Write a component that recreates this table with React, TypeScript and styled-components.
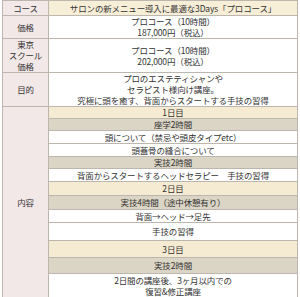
import React from "react";
import styled, { createGlobalStyle } from "styled-components";

const GlobalStyle = createGlobalStyle`
  html, body {
    margin: 0;
    padding: 0;
    background: #fff;
  }
  body {
    font-family: "Noto Sans CJK JP", "Noto Sans", sans-serif;
    color: #333;
  }
`;

type Tone = "white" | "day" | "session";

const tones: Record<Tone, string> = {
  white: "#ffffff",
  day: "#f5ebd3",
  session: "#dbd5c5",
};

const Page = styled.div`
  padding: 0 2px;
`;

const Table = styled.table`
  width: 296px;
  border-collapse: collapse;
  table-layout: fixed;
  font-size: 8.5px;
  line-height: 11px;
  letter-spacing: -0.15px;
`;

const Row = styled.tr<{ $h: number }>`
  height: ${(p) => p.$h}px;
`;

const Label = styled.th`
  width: 45px;
  padding: 0;
  background: #f2e8e8;
  border: 1px solid #bdb6ae;
  font-weight: 400;
  text-align: center;
  vertical-align: middle;
`;

const Cell = styled.td<{ $tone?: Tone }>`
  padding: 0;
  background: ${(p) => tones[p.$tone ?? "white"]};
  border: 1px solid #bdb6ae;
  text-align: center;
  vertical-align: middle;
`;

const HeadCell = styled(Cell)`
  background: #f7eed8;
`;

const schedule: { text: React.ReactNode; tone: Tone; h: number }[] = [
  { text: "1日目", tone: "day", h: 12 },
  { text: "座学2時間", tone: "session", h: 12 },
  { text: "頭について（禁忌や頭皮タイプetc）", tone: "white", h: 13 },
  { text: "頭蓋骨の縫合について", tone: "white", h: 13 },
  { text: "実技2時間", tone: "session", h: 11 },
  { text: "背面からスタートするヘッドセラピー　手技の習得", tone: "white", h: 13 },
  { text: "2日目", tone: "day", h: 14 },
  { text: "実技4時間（途中休憩有り）", tone: "session", h: 14 },
  { text: "背面→ヘッド→足先", tone: "white", h: 13 },
  { text: "手技の習得", tone: "white", h: 18 },
  { text: "3日目", tone: "day", h: 17 },
  { text: "実技2時間", tone: "session", h: 16 },
  {
    text: (
      <>
        2日間の講座後、3ヶ月以内での
        <br />
        復習&修正講座
      </>
    ),
    tone: "white",
    h: 24,
  },
];

export default function App() {
  return (
    <Page>
      <GlobalStyle />
      <Table>
        <tbody>
          <Row $h={15}>
            <Label>コース</Label>
            <HeadCell>サロンの新メニュー導入に最適な3Days「プロコース」</HeadCell>
          </Row>
          <Row $h={23}>
            <Label>価格</Label>
            <Cell>
              プロコース（10時間）
              <br />
              187,000円（税込）
            </Cell>
          </Row>
          <Row $h={34}>
            <Label>
              東京
              <br />
              スクール
              <br />
              価格
            </Label>
            <Cell>
              プロコース（10時間）
              <br />
              202,000円（税込）
            </Cell>
          </Row>
          <Row $h={33}>
            <Label>目的</Label>
            <Cell>
              プロのエステティシャンや
              <br />
              セラピスト様向け講座。
              <br />
              究極に頭を癒す、背面からスタートする手技の習得
            </Cell>
          </Row>
          {schedule.map((item, i) => (
            <Row $h={item.h} key={i}>
              {i === 0 && <Label rowSpan={schedule.length}>内容</Label>}
              <Cell $tone={item.tone}>{item.text}</Cell>
            </Row>
          ))}
        </tbody>
      </Table>
    </Page>
  );
}
